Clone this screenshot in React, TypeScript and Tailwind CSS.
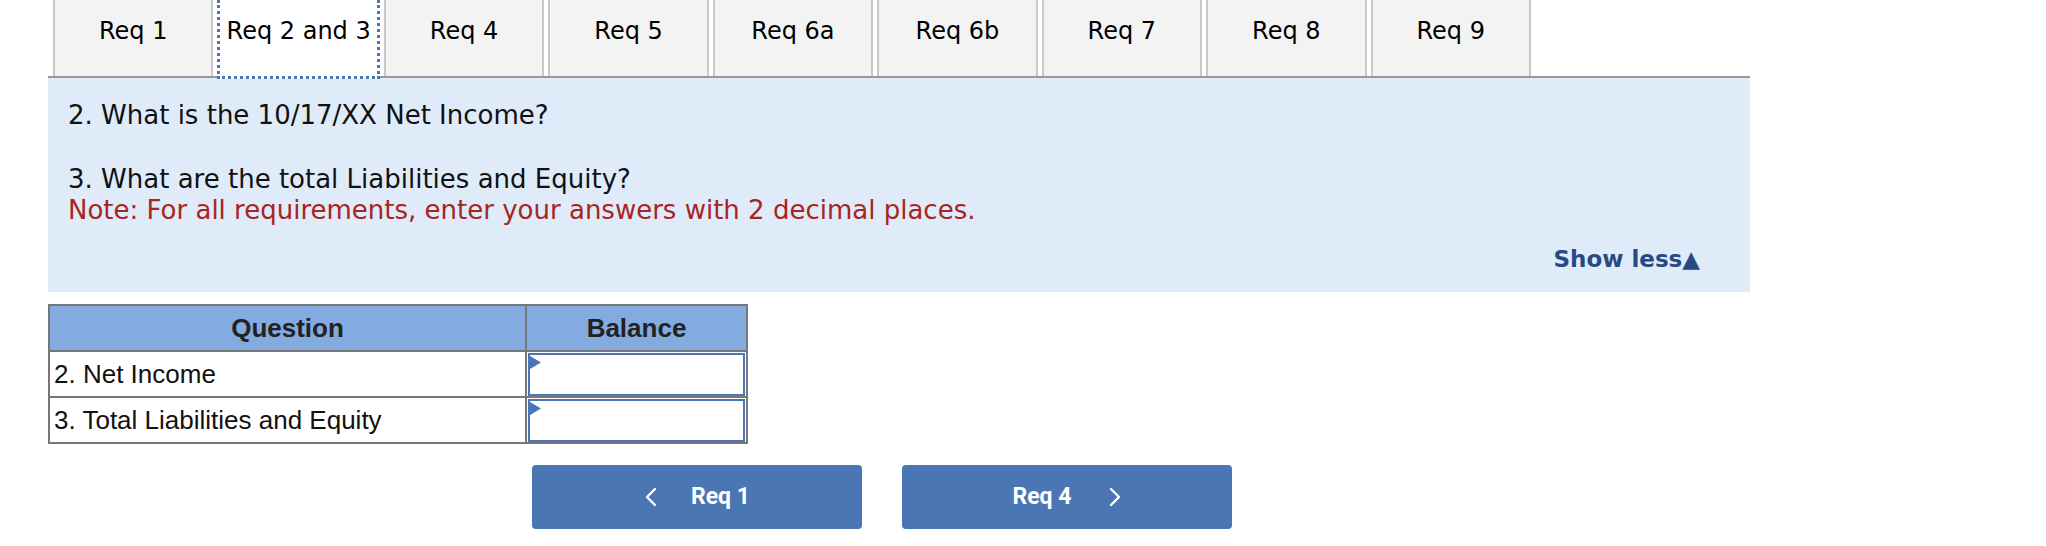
import React from "react";

const tabs = ["Req 1", "Req 2 and 3", "Req 4", "Req 5", "Req 6a", "Req 6b", "Req 7", "Req 8", "Req 9"];

function Chevron({ dir }: { dir: "left" | "right" }) {
  return (
    <svg width="14" height="20" viewBox="0 0 14 20" className="block">
      {dir === "left" ? (
        <polyline points="11,2 3,10 11,18" fill="none" stroke="white" strokeWidth="2.4" strokeLinecap="round" strokeLinejoin="round" />
      ) : (
        <polyline points="3,2 11,10 3,18" fill="none" stroke="white" strokeWidth="2.4" strokeLinecap="round" strokeLinejoin="round" />
      )}
    </svg>
  );
}

function InputCell() {
  return (
    <td className="p-0 border-2 border-[#777] bg-white">
      <div className="relative mx-[1px] h-[43px] border-2 border-[#4a76b8] bg-white">
        <svg width="11" height="13" viewBox="0 0 11 13" className="absolute left-0 top-[1px]">
          <polygon points="0,0 11,6.5 0,13" fill="#4a76b8" />
        </svg>
      </div>
    </td>
  );
}

export default function App() {
  return (
    <div className="w-[2046px] h-[546px] bg-white overflow-hidden" style={{ fontFamily: '"DejaVu Sans", Verdana, sans-serif' }}>
      {/* Tabs */}
      <div className="flex ml-[53px] w-[1478px] h-[76px] gap-[4px] items-start">
        {tabs.map((t, i) =>
          i === 1 ? (
            <div
              key={t}
              className="relative z-10 flex-1 h-[79px] bg-white border-x-[3px] border-b-[3px] border-t-0 border-dotted border-[#4a76b8] flex justify-center pt-[17px] text-[24px] leading-[28px] text-black"
            >
              {t}
            </div>
          ) : (
            <div
              key={t}
              className="flex-1 h-[76px] bg-[#f3f3f3] border-x-2 border-[#c8c8c8] flex justify-center pt-[17px] text-[24px] leading-[28px] text-black"
            >
              {t}
            </div>
          )
        )}
      </div>

      {/* Instruction panel */}
      <div className="ml-[48px] w-[1702px] h-[216px] border-t-2 border-[#999] bg-[#dfebf8] pt-[21px] pl-[20px] pr-[50px]">
        <div className="text-[26px] leading-[32px] text-[#111]">2. What is the 10/17/XX Net Income?</div>
        <div className="h-[32px]" />
        <div className="text-[26px] leading-[32px] text-[#111]">3. What are the total Liabilities and Equity?</div>
        <div className="text-[26px] leading-[30px] text-[#a8241f]">Note: For all requirements, enter your answers with 2 decimal places.</div>
        <div className="flex justify-end mt-[20px]">
          <span className="text-[23px] leading-[28px] font-bold text-[#284a84]">Show less▲</span>
        </div>
      </div>

      {/* Table */}
      <table
        className="ml-[48px] mt-[12px] w-[700px] border-collapse"
        style={{ fontFamily: '"Liberation Sans", Arial, sans-serif' }}
      >
        <thead>
          <tr className="h-[46px] bg-[#83abe0]">
            <th className="w-[477px] border-2 border-[#777] text-[26px] font-bold text-[#222] text-center">Question</th>
            <th className="border-2 border-[#777] text-[26px] font-bold text-[#222] text-center">Balance</th>
          </tr>
        </thead>
        <tbody>
          <tr className="h-[46px]">
            <td className="border-2 border-[#777] px-[4px] text-[26px] text-[#111]">2. Net Income</td>
            <InputCell />
          </tr>
          <tr className="h-[46px]">
            <td className="border-2 border-[#777] px-[4px] text-[26px] text-[#111]">3. Total Liabilities and Equity</td>
            <InputCell />
          </tr>
        </tbody>
      </table>

      {/* Nav buttons */}
      <div className="flex ml-[532px] mt-[21px] gap-[40px]" style={{ fontFamily: 'Roboto, "Liberation Sans", sans-serif' }}>
        <button className="w-[330px] h-[64px] rounded-[4px] bg-[#4a76b4] flex items-center justify-center gap-[33px] text-white text-[23px] font-bold">
          <Chevron dir="left" />
          <span>Req 1</span>
        </button>
        <button className="w-[330px] h-[64px] rounded-[4px] bg-[#4a76b4] flex items-center justify-center gap-[36px] text-white text-[23px] font-bold">
          <span>Req 4</span>
          <Chevron dir="right" />
        </button>
      </div>
    </div>
  );
}
